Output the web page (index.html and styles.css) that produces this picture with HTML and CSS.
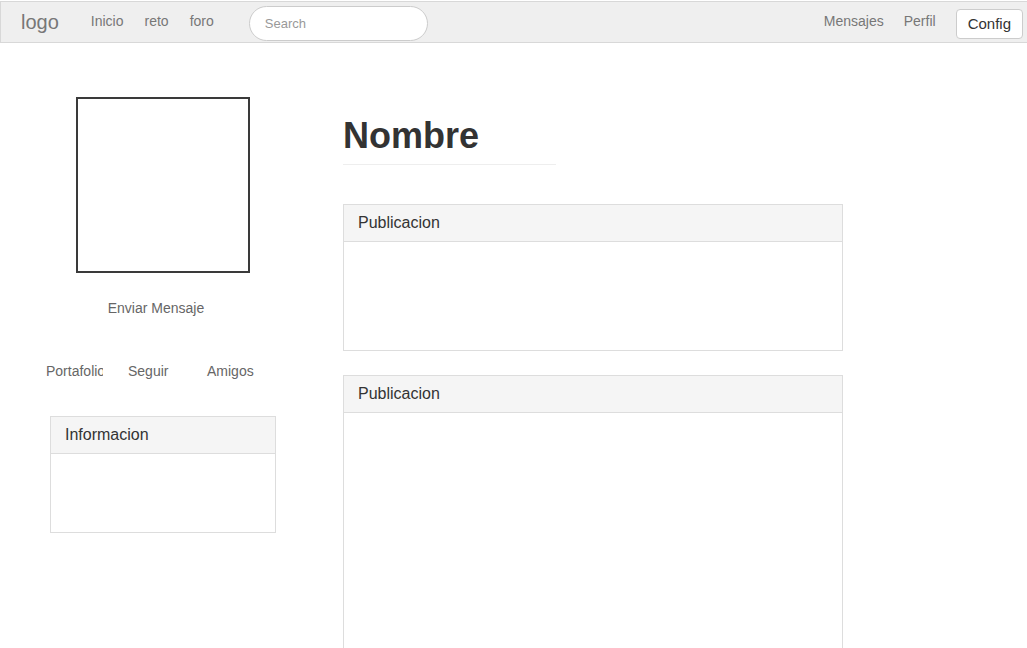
FILE: index.html
```html
<!DOCTYPE html>
<html lang="es">
<head>
<meta charset="utf-8">
<title>Perfil</title>
<link rel="stylesheet" href="styles.css">
</head>
<body>
<nav class="navbar">
  <div class="nav-left">
    <span class="logo">logo</span>
    <ul class="nav-links">
      <li>Inicio</li>
      <li>reto</li>
      <li>foro</li>
    </ul>
    <input class="search" type="text" placeholder="Search">
  </div>
  <div class="nav-right">
    <ul class="nav-links">
      <li>Mensajes</li>
      <li>Perfil</li>
    </ul>
    <button class="config">Config</button>
  </div>
</nav>
<main class="page">
  <aside class="sidebar">
    <div class="avatar"></div>
    <div class="send">Enviar Mensaje</div>
    <div class="actions">
      <span class="action clip">Portafolio</span>
      <span class="action">Seguir</span>
      <span class="action">Amigos</span>
    </div>
    <section class="panel info">
      <div class="panel-heading">Informacion</div>
      <div class="panel-body info-body"></div>
    </section>
  </aside>
  <section class="content">
    <h1 class="name">Nombre</h1>
    <section class="panel post">
      <div class="panel-heading">Publicacion</div>
      <div class="panel-body post-body"></div>
    </section>
    <section class="panel post">
      <div class="panel-heading">Publicacion</div>
      <div class="panel-body post-body-tall"></div>
    </section>
  </section>
</main>
</body>
</html>
```

FILE: styles.css
```css
* { box-sizing: border-box; }
html, body { margin: 0; padding: 0; }
body {
  font-family: "Liberation Sans", Arial, sans-serif;
  font-size: 14px;
  color: #333;
  background: #fff;
  overflow: hidden;
  height: 648px;
}
.navbar {
  margin-top: 1px;
  height: 42px;
  background: #efefef;
  border: 1px solid #d8d8d8;
  border-right: none;
  display: flex;
  justify-content: space-between;
  align-items: flex-start;
}
.nav-left, .nav-right { display: flex; align-items: flex-start; }
.logo {
  margin-left: 20px;
  font-size: 20px;
  line-height: 40px;
  color: #777;
}
.nav-links {
  list-style: none;
  margin: 0;
  padding: 0;
  display: flex;
  gap: 21px;
  color: #777;
  line-height: 39px;
  font-size: 14px;
}
.nav-left .nav-links { margin-left: 32px; }
.search {
  margin-left: 35px;
  margin-top: 4px;
  width: 179px;
  height: 35px;
  border: 1px solid #ccc;
  border-radius: 18px;
  background: #fff;
  padding: 0 15px;
  font-family: "Liberation Sans", Arial, sans-serif;
  font-size: 13px;
  color: #555;
  outline: none;
}
.search::placeholder { color: #999; }
.nav-right .nav-links { gap: 20px; }
.config {
  margin-left: 20px;
  margin-right: 4px;
  margin-top: 7px;
  height: 30px;
  padding: 0 11px;
  border: 1px solid #ccc;
  border-radius: 4px;
  background: #fff;
  font-family: "Liberation Sans", Arial, sans-serif;
  font-size: 15px;
  line-height: 26px;
  color: #333;
}
.page {
  display: flex;
  align-items: flex-start;
}
.sidebar {
  width: 343px;
  padding-left: 46px;
  padding-top: 54px;
  flex-shrink: 0;
}
.avatar {
  width: 174px;
  height: 176px;
  margin-left: 30px;
  border: 2px solid #3a3a3a;
}
.send {
  width: 220px;
  text-align: center;
  margin-top: 25px;
  line-height: 20px;
  color: #666;
}
.actions {
  display: grid;
  grid-template-columns: 57px 54px auto;
  column-gap: 25px;
  margin-top: 43px;
  line-height: 20px;
  color: #666;
  width: 220px;
}
.action { white-space: nowrap; }
.clip { overflow: hidden; }
.panel {
  border: 1px solid #ddd;
  background: #fff;
}
.panel-heading {
  background: #f5f5f5;
  border-bottom: 1px solid #ddd;
  padding: 9px 14px;
  line-height: 18px;
  font-size: 16px;
  color: #333;
}
.info {
  width: 226px;
  margin-left: 4px;
  margin-top: 35px;
}
.info-body { height: 78px; }
.content {
  width: 500px;
  padding-top: 73px;
}
.name {
  margin: 0;
  width: 213px;
  font-size: 36px;
  font-weight: bold;
  line-height: 40px;
  padding-bottom: 8px;
  border-bottom: 1px solid #eee;
  color: #333;
}
.post { margin-top: 39px; }
.post + .post { margin-top: 24px; }
.post-body { height: 108px; }
.post-body-tall { height: 300px; }
```
